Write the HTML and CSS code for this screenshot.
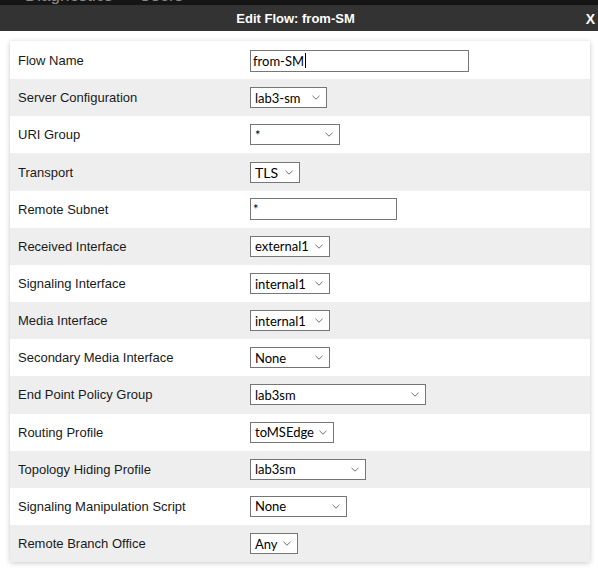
FILE: index.html
```html
<!DOCTYPE html>
<html>
<head>
<meta charset="utf-8">
<link rel="stylesheet" href="styles.css">
</head>
<body>
<div class="topnav"><span class="nav-item">Diagnostics</span><span class="nav-item">Users</span></div>
<div class="titlebar"><span class="title">Edit Flow: from-SM</span><span class="close">X</span></div>
<div class="panel">
  <div class="row"><span class="label">Flow Name</span><div class="ctrl"><span class="input w219 caret">from-SM</span></div></div>
  <div class="row"><span class="label">Server Configuration</span><div class="ctrl"><span class="select w77">lab3-sm</span></div></div>
  <div class="row"><span class="label">URI Group</span><div class="ctrl"><span class="select w90">*</span></div></div>
  <div class="row"><span class="label">Transport</span><div class="ctrl"><span class="select w50 big">TLS</span></div></div>
  <div class="row"><span class="label">Remote Subnet</span><div class="ctrl"><span class="input w147">*</span></div></div>
  <div class="row"><span class="label">Received Interface</span><div class="ctrl"><span class="select w80">external1</span></div></div>
  <div class="row"><span class="label">Signaling Interface</span><div class="ctrl"><span class="select w80">internal1</span></div></div>
  <div class="row"><span class="label">Media Interface</span><div class="ctrl"><span class="select w80">internal1</span></div></div>
  <div class="row"><span class="label">Secondary Media Interface</span><div class="ctrl"><span class="select w80">None</span></div></div>
  <div class="row"><span class="label">End Point Policy Group</span><div class="ctrl"><span class="select w176">lab3sm</span></div></div>
  <div class="row"><span class="label">Routing Profile</span><div class="ctrl"><span class="select w84">toMSEdge</span></div></div>
  <div class="row"><span class="label">Topology Hiding Profile</span><div class="ctrl"><span class="select w116">lab3sm</span></div></div>
  <div class="row"><span class="label">Signaling Manipulation Script</span><div class="ctrl"><span class="select w97">None</span></div></div>
  <div class="row"><span class="label">Remote Branch Office</span><div class="ctrl"><span class="select w48">Any</span></div></div>
</div>
</body>
</html>
```
FILE: styles.css
```css
html, body {
  margin: 0;
  padding: 0;
  background: #ffffff;
  overflow: hidden;
}
body {
  width: 598px;
  height: 568px;
  font-family: "Liberation Sans", Arial, sans-serif;
}
.topnav {
  height: 5px;
  background: #151515;
  overflow: hidden;
  display: flex;
  padding-left: 25px;
  gap: 26px;
}
.nav-item {
  font-family: "Liberation Sans", Arial, sans-serif;
  font-size: 17px;
  line-height: 17px;
  color: #8a8a8a;
  margin-top: -13px;
}
.titlebar {
  height: 26px;
  background: #333333;
  color: #ffffff;
  display: flex;
  align-items: center;
  justify-content: center;
  position: relative;
  font-weight: bold;
  font-size: 13px;
}
.title {
  margin-right: 7px;
}
.close {
  position: absolute;
  right: 3px;
  top: 6px;
  font-size: 14px;
}
.panel {
  margin: 10px 8px 0 10px;
  padding-top: 1px;
  background: #ffffff;
  box-shadow: 0 1px 5px rgba(0, 0, 0, 0.22);
}
.row {
  height: 37.17px;
  display: grid;
  grid-template-columns: 232px 1fr;
  align-items: center;
  padding-left: 8px;
}
.row:nth-child(even) {
  background: #eeeeee;
}
.label {
  font-size: 13px;
  color: #1a1a1a;
}
.ctrl {
  display: flex;
  align-items: center;
}
.input, .select {
  box-sizing: border-box;
  border: 1px solid #767676;
  background: #ffffff;
  font-family: "Lato", "Noto Sans", sans-serif;
  font-size: 13px;
  color: #000000;
  display: flex;
  align-items: center;
}
.input {
  height: 22px;
  padding-left: 2px;
}
.caret::after {
  content: "";
  width: 1px;
  height: 15px;
  background: #000;
  margin-left: 1px;
}
.select {
  height: 21px;
  padding-left: 4px;
  background-image: url("data:image/svg+xml,%3Csvg xmlns='http://www.w3.org/2000/svg' width='8' height='5' viewBox='0 0 8 5'%3E%3Cpath d='M0.5 0.8 L4 4.2 L7.5 0.8' fill='none' stroke='%23707070' stroke-width='1'/%3E%3C/svg%3E");
  background-repeat: no-repeat;
  background-position: right 6px center;
}
.select.big {
  font-size: 14px;
}
.w219 { width: 219px; }
.w147 { width: 147px; }
.w77 { width: 77px; }
.w90 { width: 90px; }
.w50 { width: 50px; }
.w80 { width: 80px; }
.w176 { width: 176px; }
.w84 { width: 84px; }
.w116 { width: 116px; }
.w97 { width: 97px; }
.w48 { width: 48px; }
```
